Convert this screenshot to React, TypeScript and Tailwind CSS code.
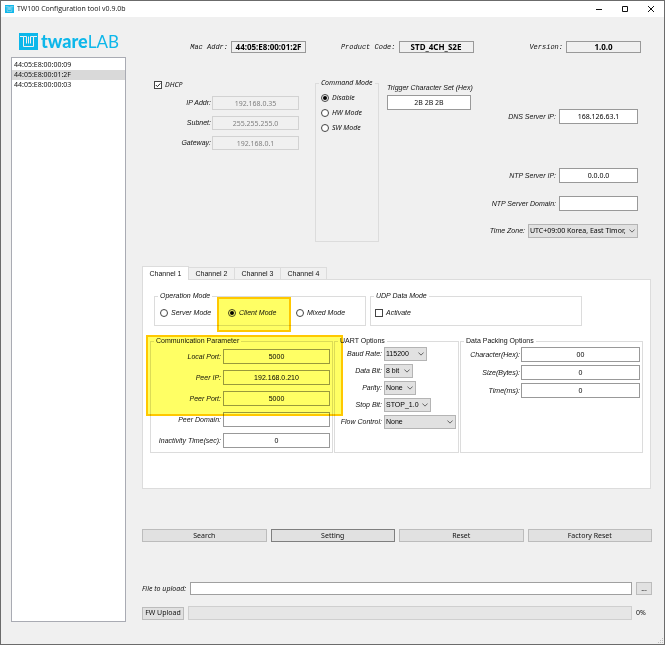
import { useId, useState } from "react";
import type { ReactNode } from "react";
import clsx from "clsx";

const UBUNTU = "font-['Noto_Sans','Open_Sans',sans-serif]";
const ARIAL = "font-['Liberation_Sans',Arial,sans-serif]";
const COURIER = "font-['Liberation_Mono','Courier_New',monospace]";

function LogoMark({ className }: { className: string }) {
  return (
    <svg viewBox="0 0 38 34" className={className} aria-hidden="true">
      <rect width="38" height="34" fill="#0db7ea" />
      <g fill="none" stroke="#f0f0f0" strokeWidth="2">
        <path d="M2 7H9V27H29V7H36" />
        <path d="M9 7H15V21M23 21V7H29M19 7V21" />
      </g>
    </svg>
  );
}

function Chevron() {
  return (
    <svg
      viewBox="0 0 8 5"
      className="pointer-events-none absolute top-1/2 right-[3px] h-[4px] w-[6px] -translate-y-1/2"
      fill="none"
      stroke="#555"
      strokeWidth="1.2"
      aria-hidden="true"
    >
      <path d="M0.5 0.5L4 4L7.5 0.5" />
    </svg>
  );
}

function Select({ id, value, className }: { id: string; value: string; className: string }) {
  return (
    <span className={clsx("relative block", className)}>
      <select
        id={id}
        className="block h-[14px] w-full appearance-none truncate border border-[#b4b4b4] bg-[#e1e1e1] pr-[10px] pl-px leading-[12px] text-black"
      >
        <option>{value}</option>
      </select>
      <Chevron />
    </span>
  );
}

type FieldProps = {
  label: string;
  value: string;
  width?: string;
  box?: string;
  labelFont?: string;
  disabled?: boolean;
};

function Field({ label, value, width = "w-full", box = "h-[15px]", labelFont = ARIAL, disabled }: FieldProps) {
  const id = useId();
  return (
    <>
      <label htmlFor={id} className={clsx("text-right whitespace-nowrap italic", labelFont)}>
        {label}
      </label>
      <input
        id={id}
        defaultValue={value}
        disabled={disabled}
        className={clsx(
          "min-w-0 border text-center",
          width,
          box,
          disabled ? "border-[#d2d2d2] bg-[#f0f0f0] text-[#808080]" : "border-[#999] bg-white text-black",
        )}
      />
    </>
  );
}

function Info({ label, value }: { label: string; value: string }) {
  const id = useId();
  return (
    <div className="flex items-center justify-end gap-[3px]">
      <label htmlFor={id} className={clsx("whitespace-nowrap italic", COURIER)}>
        {label}
      </label>
      <output
        id={id}
        className="block h-[12px] w-[75px] border border-[#999] text-center text-[8px] leading-[10px] font-bold text-black"
      >
        {value}
      </output>
    </div>
  );
}

function Radio({ name, label, checked, className }: { name: string; label: string; checked?: boolean; className?: string }) {
  return (
    <label className={clsx("flex items-center gap-[3px] whitespace-nowrap italic", className)}>
      <input
        type="radio"
        name={name}
        defaultChecked={checked}
        className="size-[8px] shrink-0 appearance-none rounded-full border border-[#444] bg-white p-px checked:bg-black checked:bg-clip-content"
      />
      {label}
    </label>
  );
}

function Check({ label, checked, className }: { label: string; checked?: boolean; className?: string }) {
  return (
    <label className={clsx("flex items-center gap-[3px] italic", className)}>
      <span className="relative block size-[8px]">
        <input
          type="checkbox"
          defaultChecked={checked}
          className="peer block size-[8px] appearance-none border border-[#444] bg-white"
        />
        <svg
          viewBox="0 0 8 8"
          className="pointer-events-none absolute inset-0 hidden size-[8px] peer-checked:block"
          fill="none"
          stroke="#222"
          aria-hidden="true"
        >
          <path d="M1.8 4L3.4 5.6L6.4 2.4" />
        </svg>
      </span>
      {label}
    </label>
  );
}

function Group({ title, legend, className, children }: { title: string; legend?: string; className?: string; children: ReactNode }) {
  return (
    <fieldset className={clsx("min-w-0 border border-[#dcdcdc]", className)}>
      <legend className={clsx("ml-[3px] px-[2px] leading-[10px] whitespace-nowrap", legend)}>{title}</legend>
      {children}
    </fieldset>
  );
}

const devices = ["44:05:E8:00:00:09", "44:05:E8:00:01:2F", "44:05:E8:00:00:03"];
const channels = ["Channel 1", "Channel 2", "Channel 3", "Channel 4"];
const actions = ["Search", "Setting", "Reset", "Factory Reset"];
const uart = [
  { id: "baud", label: "Baud Rate:", value: "115200", width: "w-[43px]" },
  { id: "databit", label: "Data Bit:", value: "8 bit", width: "w-[29px]" },
  { id: "parity", label: "Parity:", value: "None", width: "w-[32px]" },
  { id: "stopbit", label: "Stop Bit:", value: "STOP_1.0", width: "w-[47px]" },
  { id: "flow", label: "Flow Control:", value: "None", width: "w-full" },
];

const HIGHLIGHT = "pointer-events-none absolute border-2 border-[#ffc800] bg-[#ffff64] mix-blend-multiply";

function TitleBar() {
  return (
    <header className="flex h-[16px] items-center bg-white pr-[10px] pl-[4px]">
      <LogoMark className="h-[8px] w-[9px]" />
      <h1 className="grow pl-[3px] font-['Open_Sans',sans-serif]">TW100 Configuration tool v0.9.0b</h1>
      <div className="flex items-center gap-[20px]">
        <button type="button" aria-label="Minimize">
          <svg viewBox="0 0 6 6" className="size-[6px]" stroke="#111">
            <path d="M0 3.5H6" />
          </svg>
        </button>
        <button type="button" aria-label="Maximize">
          <svg viewBox="0 0 6 6" className="size-[6px]" fill="none" stroke="#111">
            <path d="M0.5 0.5H5.5V5.5H0.5Z" />
          </svg>
        </button>
        <button type="button" aria-label="Close">
          <svg viewBox="0 0 6 6" className="size-[6px]" stroke="#111">
            <path d="M0 0L6 6M6 0L0 6" />
          </svg>
        </button>
      </div>
    </header>
  );
}

function NetworkSettings() {
  return (
    <section className="flex pt-[25px] pr-[14px] pl-[12px]">
      <div className="w-[145px]">
        <Check label="DHCP" checked className="mt-[2px] h-[10px]" />
        <div className="mt-[6px] grid grid-cols-[1fr_87px] items-center gap-x-[1px] gap-y-[6px]">
          <Field label="IP Addr:" value="192.168.0.35" box="h-[14px]" disabled />
          <Field label="Subnet:" value="255.255.255.0" box="h-[14px]" disabled />
          <Field label="Gateway:" value="192.168.0.1" box="h-[14px]" disabled />
        </div>
      </div>
      <Group title="Command Mode" legend="italic" className="ml-[16px] h-[164px] w-[64px]">
        <div className="flex flex-col gap-[5px] pt-[5px] pl-[5px]">
          <Radio name="command" label="Disable" checked className="h-[10px]" />
          <Radio name="command" label="HW Mode" className="h-[10px]" />
          <Radio name="command" label="SW Mode" className="h-[10px]" />
        </div>
      </Group>
      <div className="ml-[8px] flex w-[84px] flex-col gap-[2px] pt-[5px]">
        <label htmlFor="trigger" className={clsx("leading-[10px] whitespace-nowrap italic", ARIAL)}>
          Trigger Character Set (Hex)
        </label>
        <input id="trigger" defaultValue="2B 2B 2B" className="h-[15px] w-full border border-[#999] bg-white text-center" />
      </div>
      <div className="flex grow flex-col items-end pt-[31px]">
        <div className="flex items-center gap-[3px]">
          <Field label="DNS Server IP:" value="168.126.63.1" width="w-[79px]" />
        </div>
        <div className="mt-[44px] flex items-center gap-[3px]">
          <Field label="NTP Server IP:" value="0.0.0.0" width="w-[79px]" />
        </div>
        <div className="mt-[13px] flex items-center gap-[3px]">
          <Field label="NTP Server Domain:" value="" width="w-[79px]" />
        </div>
        <div className="mt-[13px] flex items-center gap-[3px]">
          <label htmlFor="timezone" className={clsx("italic", ARIAL)}>
            Time Zone:
          </label>
          <Select id="timezone" value="UTC+09:00 Korea, East Timor," className="w-[110px]" />
        </div>
      </div>
    </section>
  );
}

function ChannelPanel() {
  const [active, setActive] = useState(0);
  return (
    <section className={clsx("mt-[24px] mr-px", ARIAL)}>
      <div role="tablist" className="flex items-end">
        {channels.map((name, i) => (
          <button
            key={name}
            type="button"
            role="tab"
            aria-selected={i === active}
            onClick={() => setActive(i)}
            className={clsx(
              "w-[46px] border-t border-r border-[#dcdcdc]",
              i === active ? "relative -mb-px h-[14px] w-[47px] border-l bg-white" : "h-[12px]",
            )}
          >
            {name}
          </button>
        ))}
      </div>
      <div className="h-[210px] border border-[#dcdcdc] bg-white pt-[11px] pr-[7px] pl-[7px]">
        <div className="flex gap-[4px] pl-[4px]">
          <Group title="Operation Mode" legend="italic" className="relative h-[35px] w-[212px]">
            <div className="flex pt-[7px] pl-[5px]">
              <Radio name="operation" label="Server Mode" className="h-[10px] w-[68px]" />
              <Radio name="operation" label="Client Mode" checked className="h-[10px] w-[68px]" />
              <Radio name="operation" label="Mixed Mode" className="h-[10px]" />
            </div>
            <div className={clsx(HIGHLIGHT, "top-[-4px] left-[62px] h-[35px] w-[74px]")} />
          </Group>
          <Group title="UDP Data Mode" legend="italic" className="h-[35px] w-[212px]">
            <Check label="Activate" className="mt-[7px] ml-[4px] h-[10px]" />
          </Group>
        </div>
        <div className="relative mt-[10px] flex gap-[1px]">
          <Group title="Communication Parameter" className="h-[117px] w-[183px]">
            <div className="grid grid-cols-[1fr_107px] items-center gap-x-[2px] gap-y-[6px] pt-[3px] pr-[2px]">
              <Field label="Local Port:" value="5000" />
              <Field label="Peer IP:" value="192.168.0.210" />
              <Field label="Peer Port:" value="5000" />
              <Field label="Peer Domain:" value="" />
              <Field label="Inactivity Time(sec):" value="0" />
            </div>
          </Group>
          <Group title="UART Options" className="h-[117px] w-[125px]">
            <div className="grid grid-cols-[1fr_72px] items-center gap-x-[2px] gap-y-[3px] pt-px pr-[2px]">
              {uart.map((o) => (
                <div key={o.id} className="contents">
                  <label htmlFor={o.id} className="text-right whitespace-nowrap italic">
                    {o.label}
                  </label>
                  <Select id={o.id} value={o.value} className={o.width} />
                </div>
              ))}
            </div>
          </Group>
          <Group title="Data Packing Options" className="h-[117px] grow">
            <div className="grid grid-cols-[59px_1fr] items-center gap-x-[1px] gap-y-[3px] pt-[1px] pr-[2px]">
              <Field label="Character(Hex):" value="00" />
              <Field label="Size(Bytes):" value="0" />
              <Field label="Time(ms):" value="0" />
            </div>
          </Group>
          <div className={clsx(HIGHLIGHT, "-top-px left-[-4px] h-[81px] w-[197px]")} />
        </div>
      </div>
    </section>
  );
}

export default function App() {
  const [selected, setSelected] = useState(1);
  return (
    <div
      className={clsx(
        "flex min-h-screen flex-col border border-[#6b6b6b] bg-[#f0f0f0] text-[7px] leading-[10px] text-[#111]",
        UBUNTU,
      )}
    >
      <TitleBar />
      <main className="relative flex grow gap-[16px] pr-[12px] pb-[22px] pl-[10px]">
        <aside className="flex w-[115px] shrink-0 flex-col">
          <div className="flex h-[40px] items-center gap-[3px] pt-[9px] pl-[8px] text-[#0db7ea]">
            <LogoMark className="h-[17px] w-[19px]" />
            <div className="font-['Lato',sans-serif] text-[18px] leading-[18px] whitespace-nowrap">
              <span className="font-black">tware</span>
              <span className="text-[17px] font-normal">LAB</span>
            </div>
          </div>
          <ul className="grow border border-[#a9abb3] bg-white pt-[2px]">
            {devices.map((mac, i) => (
              <li key={mac}>
                <button
                  type="button"
                  onClick={() => setSelected(i)}
                  className={clsx("block h-[10px] w-full pl-[2px] text-left", i === selected && "bg-[#d9d9d9]")}
                >
                  {mac}
                </button>
              </li>
            ))}
          </ul>
        </aside>
        <div className="min-w-0 grow">
          <section className="grid grid-cols-[164px_1fr_1fr] pt-[24px] pr-[11px]">
            <Info label="Mac Addr:" value="44:05:E8:00:01:2F" />
            <Info label="Product Code:" value="STD_4CH_S2E" />
            <Info label="Version:" value="1.0.0" />
          </section>
          <NetworkSettings />
          <ChannelPanel />
          <div className="mt-[40px] grid grid-cols-4 gap-[4px]">
            {actions.map((name) => (
              <button
                key={name}
                type="button"
                className={clsx("h-[13px] border bg-[#e1e1e1]", name === "Setting" ? "border-[#7f7f7f]" : "border-[#bcbcbc]")}
              >
                {name}
              </button>
            ))}
          </div>
          <div className="mt-[40px] flex items-center gap-[4px]">
            <label htmlFor="file" className="whitespace-nowrap italic">
              File to upload:
            </label>
            <input id="file" className="h-[13px] min-w-0 grow border border-[#a0a0a0] bg-white" />
            <button type="button" className="h-[13px] w-[16px] border border-[#bcbcbc] bg-[#e1e1e1]">
              ...
            </button>
          </div>
          <div className="mt-[11px] flex items-center gap-[4px]">
            <button type="button" className="h-[13px] w-[42px] border border-[#bcbcbc] bg-[#e1e1e1] whitespace-nowrap">
              FW Upload
            </button>
            <progress
              id="progress"
              aria-label="Upload progress"
              value={0}
              max={100}
              className="block h-[14px] min-w-0 grow appearance-none border border-[#cfcfcf] bg-[#e6e6e6] [&::-webkit-progress-bar]:bg-[#e6e6e6]"
            />
            <label htmlFor="progress" className="w-[16px]">
              0%
            </label>
          </div>
        </div>
        <svg viewBox="0 0 6 6" className="absolute right-0 bottom-0 size-[6px]" fill="#bfbfbf" aria-hidden="true">
          <path d="M4 0h1v1H4zM2 2h1v1H2zM4 2h1v1H4zM0 4h1v1H0zM2 4h1v1H2zM4 4h1v1H4z" />
        </svg>
      </main>
    </div>
  );
}
